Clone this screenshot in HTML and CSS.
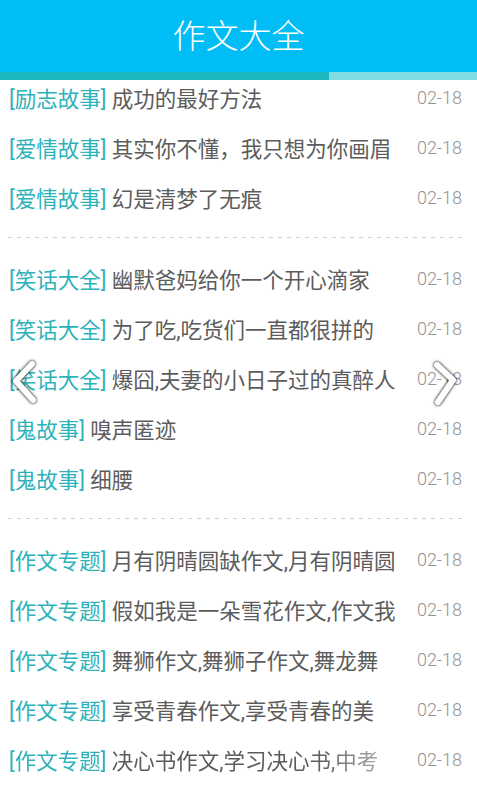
FILE: index.html
```html
<!DOCTYPE html>
<html lang="zh">
<head>
<meta charset="utf-8">
<title>作文大全</title>
<link rel="stylesheet" href="styles.css">
</head>
<body>
<div class="app">
  <header class="header">
    <h1 class="title">作文大全</h1>
    <div class="tabbar"><span class="tab-active"></span><span class="tab-rest"></span></div>
  </header>
  <main class="list">
    <section class="group">
      <div class="row"><div class="text"><span class="cat">[励志故事]</span> 成功的最好方法</div><span class="date">02-18</span></div>
      <div class="row"><div class="text"><span class="cat">[爱情故事]</span> 其实你不懂，我只想为你画眉</div><span class="date">02-18</span></div>
      <div class="row"><div class="text"><span class="cat">[爱情故事]</span> 幻是清梦了无痕</div><span class="date">02-18</span></div>
    </section>
    <div class="divider"></div>
    <section class="group">
      <div class="row"><div class="text"><span class="cat">[笑话大全]</span> 幽默爸妈给你一个开心滴家</div><span class="date">02-18</span></div>
      <div class="row"><div class="text"><span class="cat">[笑话大全]</span> 为了吃,吃货们一直都很拼的</div><span class="date">02-18</span></div>
      <div class="row"><div class="text"><span class="cat">[笑话大全]</span> 爆囧,夫妻的小日子过的真醉人</div><span class="date">02-18</span></div>
      <div class="row"><div class="text"><span class="cat">[鬼故事]</span> 嗅声匿迹</div><span class="date">02-18</span></div>
      <div class="row"><div class="text"><span class="cat">[鬼故事]</span> 细腰</div><span class="date">02-18</span></div>
    </section>
    <div class="divider"></div>
    <section class="group">
      <div class="row"><div class="text"><span class="cat">[作文专题]</span> 月有阴晴圆缺作文,月有阴晴圆</div><span class="date">02-18</span></div>
      <div class="row"><div class="text"><span class="cat">[作文专题]</span> 假如我是一朵雪花作文,作文我</div><span class="date">02-18</span></div>
      <div class="row"><div class="text"><span class="cat">[作文专题]</span> 舞狮作文,舞狮子作文,舞龙舞</div><span class="date">02-18</span></div>
      <div class="row"><div class="text"><span class="cat">[作文专题]</span> 享受青春作文,享受青春的美</div><span class="date">02-18</span></div>
      <div class="row"><div class="text fade"><span class="cat">[作文专题]</span> 决心书作文,学习决心书,中考</div><span class="date">02-18</span></div>
    </section>
  </main>
  <svg class="arrow arrow-left" width="30" height="50" viewBox="0 0 30 50"><polyline points="20,8 4,25 21,44" /></svg>
  <svg class="arrow arrow-right" width="30" height="50" viewBox="0 0 30 50"><polyline points="9,9 25,24 10,46" /></svg>
</div>
</body>
</html>
```
FILE: styles.css
```css
* { box-sizing: border-box; }
html, body { margin: 0; padding: 0; background: #ffffff; }
body {
  font-family: Roboto, "Noto Sans CJK SC", sans-serif;
  width: 477px;
  height: 792px;
  overflow: hidden;
}
.app { position: relative; width: 477px; height: 792px; overflow: hidden; }
.header {
  position: relative;
  z-index: 1;
  background: #00bdf5;
}
.title {
  margin: 0;
  height: 72px;
  display: flex;
  align-items: center;
  justify-content: center;
  color: #ffffff;
  font-size: 33px;
  font-weight: 300;
  padding-bottom: 4px;
}
.tabbar { display: flex; height: 8px; }
.tab-active { width: 329px; background: #1db7bf; }
.tab-rest { flex: 1; background: #80dce3; }
.list { margin-top: -8px; }
.group { display: flex; flex-direction: column; }
.row {
  height: 50px;
  display: flex;
  align-items: center;
  padding: 0 15px 0 9px;
}
.text {
  flex: 1;
  min-width: 0;
  white-space: nowrap;
  overflow: hidden;
  font-size: 21.5px;
  font-weight: 400;
  color: #5c5c5c;
  margin-right: 14px;
}
.cat { color: #2db2ba; }
.date {
  font-size: 18px;
  color: #939393;
  font-weight: 300;
}
.fade {
  -webkit-mask-image: linear-gradient(to right, #000 78%, rgba(0,0,0,0.35) 100%);
  mask-image: linear-gradient(to right, #000 78%, rgba(0,0,0,0.35) 100%);
}
.divider {
  height: 1px;
  margin: 15px 15px 15px 8px;
  background: repeating-linear-gradient(to right, #cfcfcf 0 4px, transparent 4px 9px);
}
.arrow {
  position: absolute;
  top: 356px;
  fill: none;
  stroke: #ffffff;
  stroke-width: 6;
  stroke-linecap: round;
  stroke-linejoin: round;
  filter: drop-shadow(0 0 1.5px rgba(0,0,0,0.75)) drop-shadow(0 0 1px rgba(0,0,0,0.45));
}
.arrow-left { left: 12px; }
.arrow-right { left: 428px; }
```
